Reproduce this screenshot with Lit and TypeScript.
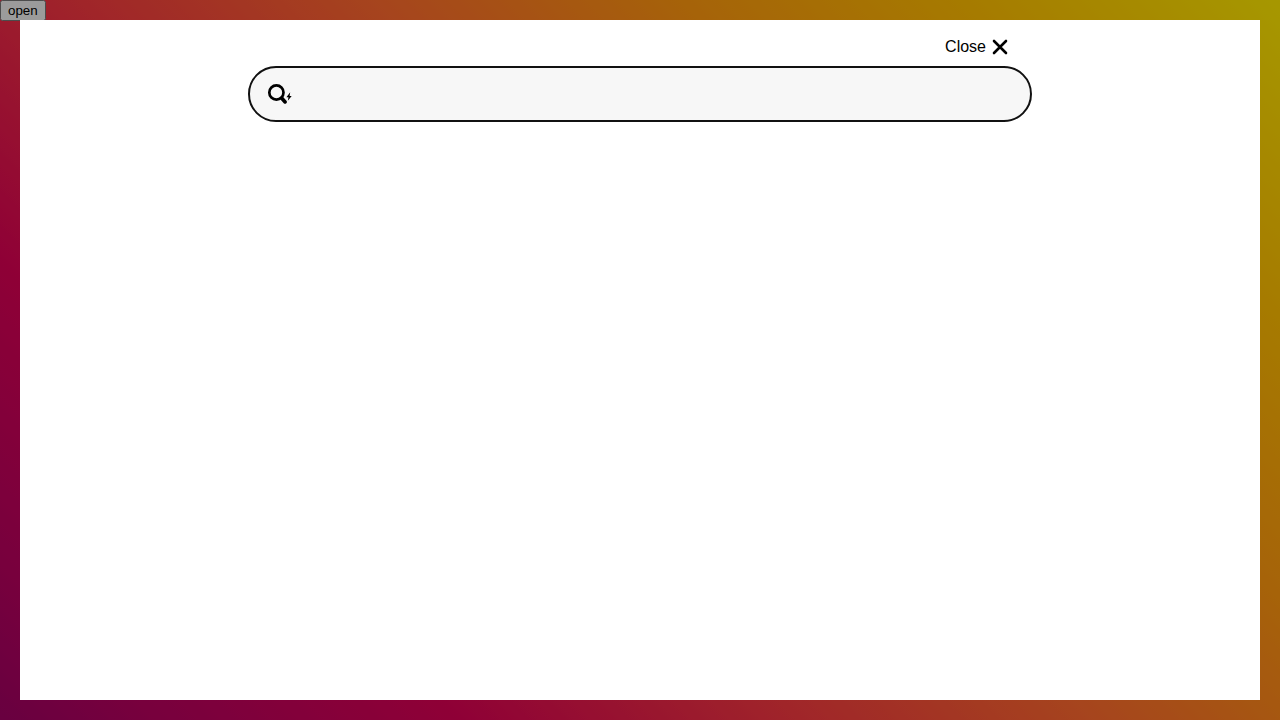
import { LitElement, html, css } from "lit";
import { customElement, state } from "lit/decorators.js";

@customElement("app-root")
export class AppRoot extends LitElement {
  static styles = css`
    :host {
      display: block;
      min-height: 100vh;
      font-family: "Liberation Sans", Arial, sans-serif;
      font-size: 16px;
      color: #000;
      background: linear-gradient(
          45deg,
          hsl(240deg 100% 20%) 0%,
          hsl(289deg 100% 21%) 11%,
          hsl(315deg 100% 27%) 22%,
          hsl(329deg 100% 36%) 33%,
          hsl(337deg 100% 43%) 44%,
          hsl(357deg 91% 59%) 56%,
          hsl(17deg 100% 59%) 67%,
          hsl(34deg 100% 53%) 78%,
          hsl(45deg 100% 50%) 89%,
          hsl(55deg 100% 50%) 100%
        )
        top left / 100% 205vh no-repeat;
    }
    .open {
      display: block;
      font-family: inherit;
    }
    .overlay {
      position: fixed;
      inset: 0;
      display: flex;
      padding: 20px;
      background: rgb(0 0 0 / 35%);
    }
    .dialog {
      flex: 1;
      padding: 12px 20px;
      background: #fff;
    }
    .content {
      max-width: 784px;
      margin: 0 auto;
    }
    .bar {
      display: flex;
      justify-content: flex-end;
      padding: 0 20px;
      margin-bottom: 4px;
    }
    .close {
      display: flex;
      align-items: center;
      gap: 2px;
      height: 30px;
      padding: 0;
      border: 0;
      background: none;
      color: inherit;
      font: inherit;
      cursor: pointer;
    }
    .search {
      display: flex;
      align-items: center;
      gap: 12px;
      box-sizing: border-box;
      height: 56px;
      padding: 0 16px;
      border: 2px solid #111;
      border-radius: 28px;
      background: #f7f7f7;
    }
    .icon {
      display: block;
      flex: none;
    }
    .input {
      flex: 1;
      min-width: 0;
      padding: 0;
      border: 0;
      outline: 0;
      background: none;
      color: inherit;
      font: inherit;
    }
  `;

  @state() private shown = true;

  render() {
    return html`
      <button class="open" type="button" @click=${() => (this.shown = true)}>open</button>
      ${this.shown ? this.renderDialog() : null}
    `;
  }

  private renderDialog() {
    return html`
      <div class="overlay">
        <section class="dialog" role="dialog" aria-modal="true" aria-label="Search">
          <div class="content">
            <div class="bar">
              <button class="close" type="button" @click=${() => (this.shown = false)}>
                Close
                <svg class="icon" width="24" height="24" viewBox="0 0 24 24" fill="none" stroke="currentColor" stroke-width="2.6" stroke-linecap="round" aria-hidden="true">
                  <path d="M6 6l12 12M18 6L6 18" />
                </svg>
              </button>
            </div>
            <label class="search">
              <svg class="icon" width="26" height="24" viewBox="0 0 26 24" fill="none" stroke="currentColor" aria-hidden="true">
                <circle cx="10.4" cy="10.5" r="7.1" stroke-width="2.7" />
                <path d="M15.8 16.3l3.3 3.6" stroke-width="3.7" stroke-linecap="round" />
                <path d="M24.2 10.2l-3.8 5h2.1l-.7 3.6 3.9-4.9h-2.1z" fill="currentColor" stroke="none" />
              </svg>
              <input class="input" type="text" aria-label="Search" />
            </label>
          </div>
        </section>
      </div>
    `;
  }
}
